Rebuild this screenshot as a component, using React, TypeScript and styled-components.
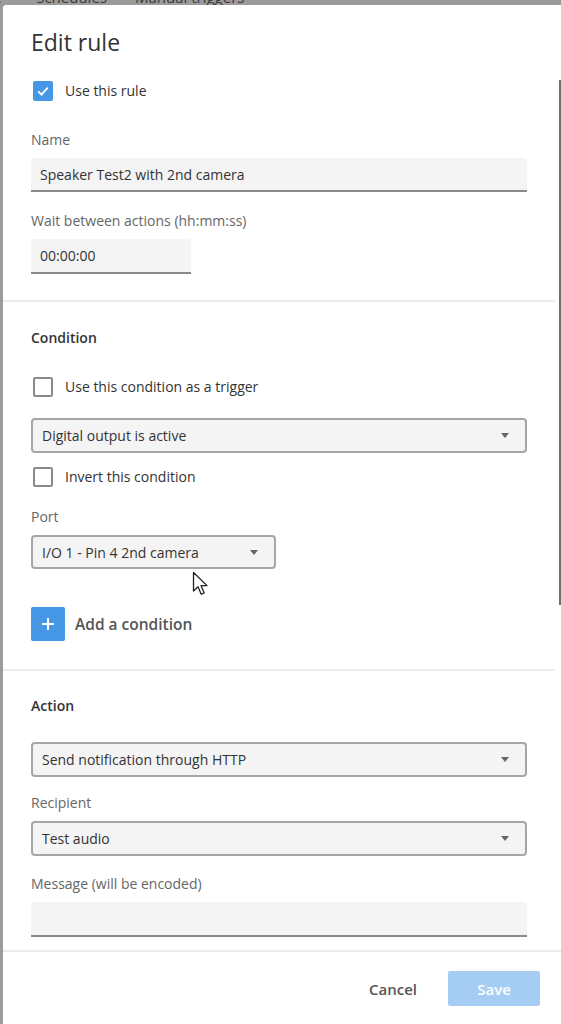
import styled, { createGlobalStyle } from "styled-components";

const GlobalStyle = createGlobalStyle`
  html, body {
    margin: 0;
    padding: 0;
    background: #9b9b9b;
    font-family: "Open Sans", "Liberation Sans", sans-serif;
    color: #333;
  }
  * { box-sizing: border-box; }
`;

const Page = styled.div`
  height: 1024px;
  overflow: hidden;
  display: flex;
  flex-direction: column;
  background: #9b9b9b;
`;

const TabsBar = styled.div`
  height: 5px;
  flex-shrink: 0;
  overflow: hidden;
  display: flex;
  align-items: flex-end;
  gap: 28px;
`;

const Tab = styled.span<{ $offset?: number }>`
  font-size: 15px;
  line-height: 15px;
  color: #3a3a3a;
  margin-left: ${({ $offset }) => $offset ?? 0}px;
  white-space: nowrap;
`;

const Dialog = styled.div`
  position: relative;
  flex: 1;
  margin-left: 3px;
  background: #fff;
  border-top-left-radius: 3px;
  display: flex;
  flex-direction: column;
  overflow: hidden;
`;

const Header = styled.div`
  padding: 22px 28px 8px;
`;

const Title = styled.h1`
  margin: 0;
  font-size: 23px;
  line-height: 30px;
  font-weight: 400;
  color: #333;
`;

const Body = styled.div`
  position: relative;
  height: 885px;
  flex-shrink: 0;
  overflow: hidden;
  padding-right: 6px;
`;

const ScrollThumb = styled.div`
  position: absolute;
  top: 15px;
  right: 0;
  width: 2px;
  height: 525px;
  background: #6e6e6e;
`;

const Section = styled.section<{ $top: number; $bottom: number }>`
  padding: ${({ $top, $bottom }) => `${$top}px 28px ${$bottom}px`};
  display: flex;
  flex-direction: column;
  align-items: flex-start;
`;

const Divider = styled.hr`
  margin: 0;
  border: none;
  height: 2px;
  background: #ececec;
`;

const Heading = styled.h2`
  margin: 0;
  font-size: 14px;
  line-height: 20px;
  font-weight: 600;
  color: #333;
`;

const Spacer = styled.div<{ $h: number }>`
  height: ${({ $h }) => $h}px;
  flex-shrink: 0;
`;

const CheckRow = styled.label`
  display: flex;
  align-items: center;
  gap: 12px;
  padding-left: 2px;
  font-size: 14px;
  line-height: 20px;
  color: #333;
  cursor: pointer;
`;

const Box = styled.span<{ $checked?: boolean }>`
  width: 20px;
  height: 20px;
  border-radius: 2px;
  display: flex;
  align-items: center;
  justify-content: center;
  background: ${({ $checked }) => ($checked ? "#4597e6" : "#fff")};
  border: ${({ $checked }) => ($checked ? "none" : "2px solid #8a8a8a")};
`;

const Label = styled.div`
  font-size: 14px;
  line-height: 20px;
  color: #666;
  margin-bottom: 8px;
`;

const TextInput = styled.div<{ $width?: number; $height?: number }>`
  width: ${({ $width }) => ($width ? `${$width}px` : "100%")};
  height: ${({ $height }) => $height ?? 34}px;
  background: #f4f4f4;
  border-bottom: 2px solid #8a8a8a;
  border-radius: 3px 3px 0 0;
  padding: 0 9px;
  display: flex;
  align-items: center;
  font-size: 14px;
  color: #333;
`;

const Select = styled.div<{ $width?: number; $height?: number }>`
  width: ${({ $width }) => ($width ? `${$width}px` : "100%")};
  height: ${({ $height }) => $height ?? 35}px;
  background: #f4f4f4;
  border: 2px solid #a6a6a6;
  border-radius: 4px;
  padding: 0 16px 0 9px;
  display: flex;
  align-items: center;
  justify-content: space-between;
  font-size: 14px;
  color: #333;
`;

const Caret = styled.span`
  width: 0;
  height: 0;
  border-left: 4.5px solid transparent;
  border-right: 4.5px solid transparent;
  border-top: 5px solid #666;
`;

const AddRow = styled.button`
  display: flex;
  align-items: center;
  gap: 10px;
  border: none;
  background: none;
  padding: 0;
  font-family: inherit;
  font-size: 15.5px;
  font-weight: 600;
  color: #555;
  cursor: pointer;
`;

const AddIcon = styled.span`
  width: 34px;
  height: 34px;
  border-radius: 2px;
  background: #4597e6;
  display: flex;
  align-items: center;
  justify-content: center;
`;

const Footer = styled.div`
  border-top: 2px solid #ececec;
  padding: 19px 21px 0 0;
  display: flex;
  justify-content: flex-end;
  align-items: center;
  gap: 31px;
`;

const FooterButton = styled.button<{ $primary?: boolean }>`
  height: 35px;
  border: none;
  border-radius: 2px;
  font-family: inherit;
  font-size: 15px;
  font-weight: 600;
  padding: 0;
  width: ${({ $primary }) => ($primary ? "92px" : "auto")};
  background: ${({ $primary }) => ($primary ? "#a5cdf3" : "transparent")};
  color: ${({ $primary }) => ($primary ? "#fff" : "#555")};
`;

const Pointer = styled.svg`
  position: absolute;
  left: 189px;
  top: 566px;
`;

const Checkbox = ({ checked, label }: { checked?: boolean; label: string }) => (
  <CheckRow>
    <Box $checked={checked}>
      {checked && (
        <svg width="14" height="14" viewBox="0 0 14 14">
          <path d="M2.2 7.4 L5.5 10.6 L11.8 3.6" fill="none" stroke="#fff" strokeWidth="1.8" />
        </svg>
      )}
    </Box>
    {label}
  </CheckRow>
);

const Dropdown = ({ value, width, height }: { value: string; width?: number; height?: number }) => (
  <Select $width={width} $height={height}>
    <span>{value}</span>
    <Caret />
  </Select>
);

export default function App() {
  return (
    <>
      <GlobalStyle />
      <Page>
        <TabsBar>
          <Tab $offset={-6}>c</Tab>
          <Tab $offset={7}>Schedules</Tab>
          <Tab>Manual triggers</Tab>
        </TabsBar>
        <Dialog>
          <Header>
            <Title>Edit rule</Title>
          </Header>
          <Body>
            <ScrollThumb />
            <Section $top={16} $bottom={26}>
              <Checkbox checked label="Use this rule" />
              <Spacer $h={29} />
              <Label>Name</Label>
              <TextInput>Speaker Test2 with 2nd camera</TextInput>
              <Spacer $h={19} />
              <Label>Wait between actions (hh:mm:ss)</Label>
              <TextInput $width={160} $height={35}>00:00:00</TextInput>
            </Section>
            <Divider />
            <Section $top={26} $bottom={28}>
              <Heading>Condition</Heading>
              <Spacer $h={29} />
              <Checkbox label="Use this condition as a trigger" />
              <Spacer $h={21} />
              <Dropdown value="Digital output is active" />
              <Spacer $h={14} />
              <Checkbox label="Invert this condition" />
              <Spacer $h={20} />
              <Label>Port</Label>
              <Dropdown value="I/O 1 - Pin 4 2nd camera" width={245} height={34} />
              <Spacer $h={38} />
              <AddRow>
                <AddIcon>
                  <svg width="14" height="14" viewBox="0 0 14 14">
                    <path d="M7 1 V13 M1 7 H13" stroke="#fff" strokeWidth="2" />
                  </svg>
                </AddIcon>
                Add a condition
              </AddRow>
            </Section>
            <Divider />
            <Section $top={25} $bottom={0}>
              <Heading>Action</Heading>
              <Spacer $h={26} />
              <Dropdown value="Send notification through HTTP" />
              <Spacer $h={16} />
              <Label>Recipient</Label>
              <Dropdown value="Test audio" />
              <Spacer $h={18} />
              <Label>Message (will be encoded)</Label>
              <TextInput $height={35} />
            </Section>
          </Body>
          <Footer>
            <FooterButton>Cancel</FooterButton>
            <FooterButton $primary>Save</FooterButton>
          </Footer>
          <Pointer width="18" height="26" viewBox="0 0 18 26">
            <path
              d="M1.5 1.5 L1.5 20 L6 15.8 L9.2 23.2 L12.2 22 L9 14.6 L15 14.6 Z"
              fill="#fff"
              stroke="#222"
              strokeWidth="1.3"
              strokeLinejoin="round"
            />
          </Pointer>
        </Dialog>
      </Page>
    </>
  );
}
